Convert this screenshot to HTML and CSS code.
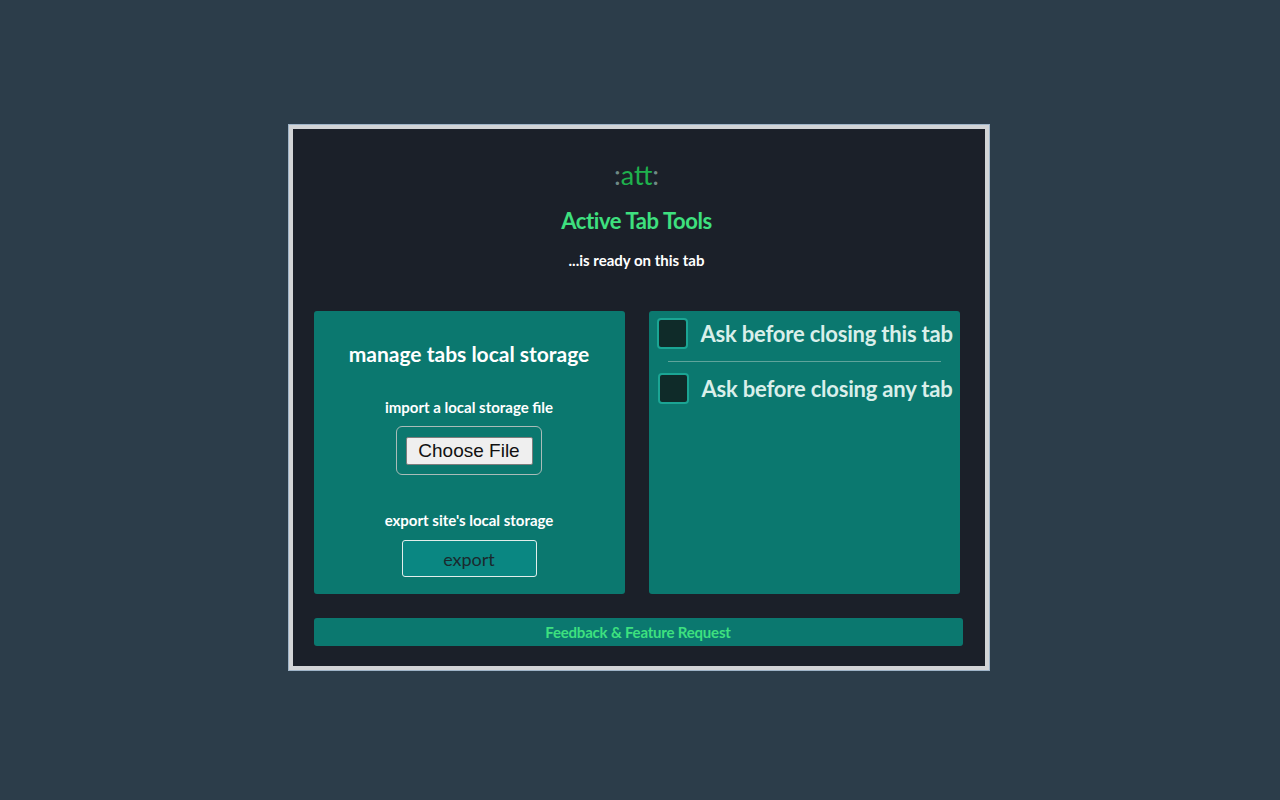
FILE: index.html
```html
<!DOCTYPE html>
<html>
<head>
<meta charset="utf-8">
<link rel="stylesheet" href="styles.css">
</head>
<body>
<div class="frame">
  <div class="popup">
    <div class="logo"><span class="colon">:</span>att<span class="colon">:</span></div>
    <h1 class="title">Active Tab Tools</h1>
    <p class="ready">...is ready on this tab</p>
    <div class="panels">
      <section class="panel storage">
        <h2 class="panel-title">manage tabs local storage</h2>
        <p class="label import-label">import a local storage file</p>
        <div class="file-wrap"><button class="file-btn">Choose File</button></div>
        <p class="label export-label">export site's local storage</p>
        <button class="export-btn">export</button>
      </section>
      <section class="panel options">
        <label class="option first"><span class="box"></span><span class="opt-text">Ask before closing this tab</span></label>
        <div class="sep"></div>
        <label class="option"><span class="box"></span><span class="opt-text">Ask before closing any tab</span></label>
      </section>
    </div>
    <div class="feedback">Feedback &amp; Feature Request</div>
  </div>
</div>
</body>
</html>
```
FILE: styles.css
```css
html, body {
  margin: 0;
  height: 100%;
}
body {
  background: #2c3d4a;
  display: flex;
  align-items: flex-start;
  justify-content: center;
  font-family: "Lato", "Open Sans", sans-serif;
}
.frame {
  margin-top: 125px;
  margin-left: -3px;
  width: 692px;
  border: 4px solid #d2d4d6;
  box-shadow: 0 0 0 1px #9fb4c8;
  background: #1b2029;
}
.popup {
  padding: 0 25px 20px 21px;
  display: flex;
  flex-direction: column;
  align-items: stretch;
}
.logo {
  text-align: center;
  color: #1fb14d;
  font-size: 27px;
  margin-top: 31px;
  line-height: 29px;
}
.logo .colon { color: #6f8a86; }
.title {
  margin: 19px 0 0;
  text-align: center;
  color: #3ee07f;
  font-size: 22px;
  font-weight: 700;
  line-height: 26px;
  letter-spacing: -0.4px;
}
.ready {
  margin: 18px 0 0;
  text-align: center;
  color: #ffffff;
  font-size: 15px;
  font-weight: 700;
  line-height: 16px;
}
.panels {
  margin-top: 43px;
  display: grid;
  grid-template-columns: 311px 311px;
  column-gap: 24px;
}
.panel {
  background: #0b786f;
  border-radius: 3px;
  height: 283px;
  box-sizing: border-box;
}
.storage {
  display: flex;
  flex-direction: column;
  align-items: center;
}
.panel-title {
  margin: 31px 0 0;
  color: #ffffff;
  font-size: 21px;
  font-weight: 700;
  line-height: 24px;
}
.label {
  margin: 0;
  color: #ffffff;
  font-size: 15px;
  font-weight: 700;
  line-height: 16px;
}
.import-label { margin-top: 33px; }
.file-wrap {
  margin-top: 11px;
  width: 146px;
  height: 49px;
  box-sizing: border-box;
  border: 1.5px solid #a9bcb8;
  border-radius: 6px;
  display: flex;
  align-items: center;
  justify-content: center;
}
.file-btn {
  width: 127px;
  height: 28px;
  background: #efefef;
  border: 1px solid #7d7d7d;
  border-radius: 2px;
  font-family: "Liberation Sans", Arial, sans-serif;
  font-size: 19px;
  color: #111;
  padding: 0;
}
.export-label { margin-top: 37px; }
.export-btn {
  margin-top: 12px;
  width: 135px;
  height: 37px;
  background: #0a8782;
  border: 1.5px solid #e2eeec;
  border-radius: 3px;
  color: #1a2a2e;
  font-family: "Lato", sans-serif;
  font-size: 18px;
  padding: 0;
}
.options {
  padding: 6px 8px 0 8px;
  display: flex;
  flex-direction: column;
}
.option {
  display: flex;
  align-items: center;
  gap: 13px;
  height: 32px;
}
.box {
  width: 31px;
  height: 31px;
  box-sizing: border-box;
  background: #0f2b29;
  border: 2px solid #1ba594;
  border-radius: 4px;
  flex: none;
}
.opt-text {
  color: #d9efea;
  font-size: 22px;
  font-weight: 700;
  white-space: nowrap;
  letter-spacing: -0.2px;
}
.option + .sep + .option { margin-left: 1px; }
.sep {
  margin: 12px 11px 10px 11px;
  height: 1px;
  background: #5fa49b;
}
.feedback {
  margin-top: 24px;
  margin-right: -3px;
  height: 28px;
  background: #0b786f;
  border-radius: 3px;
  color: #3ee07f;
  font-size: 15px;
  font-weight: 700;
  display: flex;
  align-items: center;
  justify-content: center;
  letter-spacing: -0.2px;
}
```
